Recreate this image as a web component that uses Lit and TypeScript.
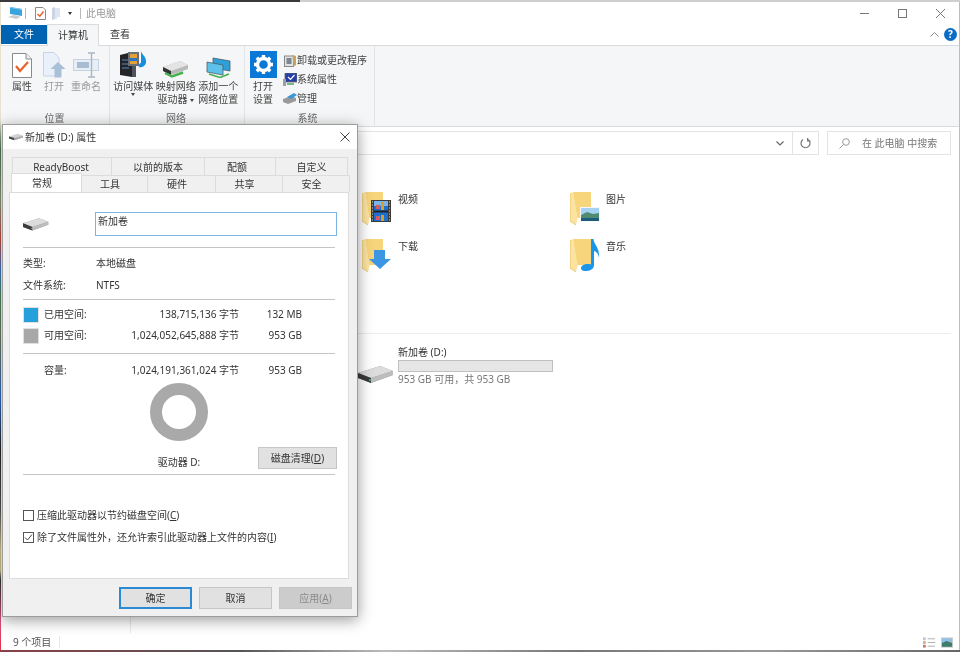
import { css, html, LitElement, svg } from "lit";
import { customElement } from "lit/decorators.js";

const folder = (extra: unknown) => html`<svg width="36" height="36" viewBox="0 0 36 36">
  <path d="M3 0 H21 V26 H7 Z" fill="#f6d57c" />
  <path d="M0 1 L3 0.5 L7.5 26 L6 33 L0 29 Z" fill="#fce3a0" />
  <path d="M0 1 V29 L6 33" fill="none" stroke="#e7bd5c" stroke-width=".8" />
  ${extra}
</svg>`;

const filmOverlay = svg`<g>
  <rect x="9" y="8" width="20" height="22" fill="#3b3b3b" />
  <rect x="12" y="9" width="14" height="20" fill="#1f6fd0" />
  <rect x="12" y="9" width="14" height="5" fill="#7ab4ea" />
  <rect x="19" y="10" width="3" height="8" fill="#d8a02a" />
  <rect x="14" y="13" width="4" height="4" fill="#d85a5a" />
  <rect x="19" y="23" width="3" height="6" fill="#d8a02a" />
  <rect x="14" y="24" width="4" height="4" fill="#d85a5a" />
  <rect x="12" y="18.5" width="14" height="2" fill="#222" />
  <path d="M10 10h1M10 13h1M10 16h1M10 19h1M10 22h1M10 25h1M10 28h1M27 10h1M27 13h1M27 16h1M27 19h1M27 22h1M27 25h1M27 28h1" stroke="#ddd" />
</g>`;
const photoOverlay = svg`<g>
  <rect x="10" y="15" width="20" height="15" fill="#f7f7f7" />
  <rect x="11" y="16" width="18" height="13" fill="#a5d2f2" />
  <path d="M11 23 L17 20 L23 22 L29 21 V29 H11 Z" fill="#4f8a72" />
  <path d="M11 26 H29 V29 H11 Z" fill="#1f5c7a" />
</g>`;
const downOverlay = svg`<path d="M12 11 H23 V20 H29 L18 30 L7 20 H12 Z" fill="#3b97e4" />`;
const noteOverlay = svg`<path d="M21 0 H23.5 C24 6 30 9 29 19 C28.5 15 26.5 12.5 24 12 V26 C24 30 20 32 15 32 C11 32 10 29 12 27 C14 25 18 24.5 21 25.5 Z" fill="#1a96e8" />`;

const drive = (w = 36, h = 22) => html`<svg width=${w} height=${h} viewBox="0 0 36 22">
  <path d="M0 10 L22 3 L35 8 V12 L13 20 L0 15 Z" fill="#8f8f8f" />
  <path d="M0 10 L22 3 L35 8 L13 15 Z" fill="#dcdcdc" />
  <path d="M0 10 L13 15 V20 L0 15 Z" fill="#3a3a3a" />
  <path d="M13 15 L35 8 V12 L13 20 Z" fill="#bdbdbd" />
  <circle cx="12" cy="17" r=".9" fill="#43d17a" />
</svg>`;

const smallDrive = html`<svg width="14" height="8" viewBox="0 0 26 14">
  <path d="M0 6 L16 1 L26 4 V8 L10 13 L0 10 Z" fill="#d2d2d2" />
  <path d="M0 6 L10 9 V13 L0 10 Z" fill="#444" />
  <path d="M10 9 L26 5 V8 L10 13 Z" fill="#aaa" />
</svg>`;

const propsIcon = html`<svg width="20" height="25" viewBox="0 0 20 25">
  <path d="M.5 .5 H14 L19.5 6 V24.5 H.5 Z" fill="#fff" stroke="#8a8a8a" />
  <path d="M14 .5 V6 H19.5" fill="#eee" stroke="#8a8a8a" />
  <path d="M4 13 L8 18 L16 9" fill="none" stroke="#e8622c" stroke-width="2.2" />
</svg>`;
const openIcon = html`<svg width="23" height="26" viewBox="0 0 23 26">
  <path d="M.5 .5 H11 L16 6 V24 H.5 Z" fill="#e9f0fa" stroke="#c5d4ea" />
  <path d="M15 10 L22.5 17 H18.5 V25.5 H11.5 V17 H7.5 Z" fill="#a9c0d8" />
</svg>`;
const renameIcon = html`<svg width="26" height="26" viewBox="0 0 26 26">
  <rect x=".5" y="7.5" width="25" height="11" fill="#e7eef7" stroke="#c5d2e0" />
  <rect x="4" y="10" width="12" height="6" fill="#a9bdd2" />
  <path d="M15 1 H22 M15 25 H22 M18.5 1 V25" fill="none" stroke="#a8b6c4" stroke-width="1.4" />
</svg>`;
const mediaIcon = html`<svg width="28" height="27" viewBox="0 0 28 27">
  <path d="M1 4 L13 1 V26 L1 24 Z" fill="#22262b" />
  <path d="M13 3 L17 4 V26 L13 26 Z" fill="#50555c" />
  <path d="M3 9 H10 M3 13 H10 M3 17 H10" stroke="#5f86b0" />
  <rect x="9" y="1" width="11" height="14" fill="#6a6f78" />
  <rect x="11" y="3" width="7" height="10" fill="#e0a13a" />
  <rect x="11" y="7" width="7" height="3" fill="#2f72c4" />
  <path d="M22 0 C23 4 28 6 27 12 C26 15 23 17 20 16 C19 14 21 12 22 12 Z" fill="#1590e0" />
</svg>`;
const mapIcon = html`<svg width="27" height="17" viewBox="0 0 27 17">
  <path d="M1 6 L18 0 L26 4 V8 L9 14 L1 10 Z" fill="#b9b9b9" />
  <path d="M1 6 L18 0 L26 4 L9 10 Z" fill="#e4e4e4" />
  <path d="M1 6 L9 10 V14 L1 10 Z" fill="#333" />
  <path d="M3 12 L10 15.5 L21 11.5" fill="none" stroke="#46b04f" stroke-width="2.4" />
</svg>`;
const netIcon = html`<svg width="25" height="21" viewBox="0 0 25 21">
  <path d="M7 1 L24 4 V14 L7 11 Z" fill="#2f9fd8" stroke="#4a5e68" stroke-width=".8" />
  <path d="M1 5 L17 8 V18 L1 15 Z" fill="#5ec1ea" stroke="#4a5e68" stroke-width=".8" />
  <path d="M3 17 L14 20.5 L23 17" fill="none" stroke="#46b04f" stroke-width="1.6" />
</svg>`;
const gearIcon = html`<svg width="27" height="27" viewBox="0 0 27 27">
  <rect width="27" height="27" fill="#0a78d7" />
  <g fill="none" stroke="#fff">
    <circle cx="13.5" cy="13.5" r="6" stroke-width="3.4" />
    <path d="M13.5 4 V7.5 M13.5 19.5 V23 M4 13.5 H7.5 M19.5 13.5 H23 M6.8 6.8 L9.3 9.3 M17.7 17.7 L20.2 20.2 M20.2 6.8 L17.7 9.3 M9.3 17.7 L6.8 20.2" stroke-width="3.4" />
  </g>
</svg>`;
const uninstallIcon = html`<svg width="13" height="13" viewBox="0 0 13 13">
  <rect x="1" y="2" width="9" height="10.5" fill="#dfe3e6" stroke="#888" />
  <rect x="3" y="4" width="5" height="6" fill="#7c8790" />
  <path d="M9 1 L12.5 2 V11 L10 12.5 Z" fill="#c9a35a" />
</svg>`;
const sysIcon = html`<svg width="14" height="13" viewBox="0 0 14 13">
  <rect x="2" y="0" width="12" height="9" fill="#233fa8" stroke="#666" stroke-width=".8" />
  <path d="M5 4 L7.5 6.5 L11.5 2" fill="none" stroke="#fff" stroke-width="1.2" />
  <rect x="0" y="6" width="3" height="7" fill="#9aa0a6" />
  <path d="M4 11 H11" stroke="#5aa96a" stroke-width="1.6" />
</svg>`;
const manageIcon = html`<svg width="14" height="11" viewBox="0 0 14 11">
  <path d="M0 6 L8 3 L13 5 V8 L5 11 L0 9 Z" fill="#9a9a9a" />
  <path d="M4 4 L11 0 L14 2 L8 6 Z" fill="#3b97d8" />
</svg>`;
const pcIcon = html`<svg width="15" height="13" viewBox="0 0 15 13">
  <path d="M2 0 L14 2 V9 L2 7 Z" fill="#39a3de" />
  <path d="M2 0 L14 2 V3 L2 1 Z" fill="#7ec7ee" />
  <path d="M0 10 L6 8 L13 10 L8 12 Z" fill="#c8ccd0" />
</svg>`;
const miniCheck = html`<svg width="11" height="13" viewBox="0 0 11 13">
  <path d="M.5 .5 H8 L10.5 3 V12.5 H.5 Z" fill="#fff" stroke="#8a8a8a" />
  <path d="M2.5 7 L4.8 9.2 L8.5 4.5" fill="none" stroke="#e8622c" stroke-width="1.5" />
</svg>`;
const miniFolder = html`<svg width="9" height="13" viewBox="0 0 9 13">
  <path d="M0 1 H8 V10 L5 10 V12 L0 13 Z" fill="#dfe6f0" />
  <path d="M0 1 L3 0 V11 L0 13 Z" fill="#c9d4e4" />
</svg>`;

@customElement("app-root")
export class AppRoot extends LitElement {
  static styles = css`
    :host {
      display: block;
      width: 960px;
      height: 652px;
      overflow: hidden;
      font-family: "Noto Sans", "Noto Sans CJK SC", sans-serif;
      font-size: 10px;
      line-height: 13px;
      color: #333;
    }
    .stage {
      position: relative;
      box-sizing: border-box;
      width: 960px;
      height: 652px;
      padding: 2px 1px 2px 1px;
      filter: blur(0.6px);
      background:
        linear-gradient(90deg, #3a3a3a 0 300px, #cfcfcf 300px) top / 100% 2px no-repeat,
        linear-gradient(90deg, #8a4048, #555 25%, #bbb 40%, #777 60%, #999 80%, #666) bottom / 100% 2px no-repeat,
        linear-gradient(180deg, #e9e2d0 0 120px, #4a7a52 150px, #8a9a78 200px, #c84a40 240px, #3a78c8 270px, #4a8a58 300px, #6a7a60 340px, #2a6ac8 400px, #222 450px, #555 510px, #d8c890 550px, #d8c890 570px, #333 580px, #d85080 620px, #e03040 652px) left / 1.5px 100% no-repeat,
        linear-gradient(#bdbdbd, #bdbdbd) right / 1px 100% no-repeat,
        #fff;
    }
    .window {
      display: flex;
      flex-direction: column;
      height: 100%;
      background: #fff;
    }
    .titlebar {
      display: flex;
      align-items: center;
      height: 22px;
      flex: none;
      padding-left: 7px;
    }
    .titlebar .bar {
      width: 1px;
      height: 11px;
      background: #b8b8b8;
    }
    .titlebar .bar.first { margin: 0 9px 0 2px; }
    .titlebar .title {
      color: #9a9a9a;
      margin-left: 5px;
    }
    .gap-6 { width: 6px; }
    .gap-7 { width: 7px; }
    .gap-8 { width: 8px; }
    .drop {
      width: 0;
      height: 0;
      border: 2.5px solid transparent;
      border-top: 3px solid #333;
      border-bottom: 0;
    }
    .win-controls {
      margin-left: auto;
      display: flex;
      align-items: center;
      padding-right: 14px;
      gap: 29px;
    }
    .tabsbar {
      display: flex;
      align-items: stretch;
      height: 22px;
      flex: none;
      position: relative;
      border-bottom: 1px solid #dadbdc;
      box-sizing: border-box;
    }
    .tab {
      display: flex;
      align-items: center;
      justify-content: center;
      width: 42px;
      box-sizing: border-box;
    }
    .tab.file {
      background: #0063b1;
      color: #fff;
      width: 46px;
      height: 19px;
      margin-top: 1px;
    }
    .tab.on {
      width: 52px;
      border: 1px solid #dadbdc;
      border-bottom: 0;
      height: 22px;
      background: #f5f6f7;
      padding-bottom: 1px;
    }
    .tabsbar .right {
      margin-left: auto;
      display: flex;
      align-items: center;
      gap: 5px;
      padding-right: 2px;
    }
    .help {
      width: 13px;
      height: 13px;
      border-radius: 50%;
      background: #0a6cc4;
      color: #fff;
      font-weight: 700;
      font-size: 10px;
      line-height: 13px;
      text-align: center;
    }
    .ribbon {
      display: flex;
      height: 81px;
      flex: none;
      background: #f5f6f7;
      border-bottom: 1px solid #dadbdc;
      box-sizing: border-box;
    }
    .group {
      display: flex;
      flex-direction: column;
      border-right: 1px solid #e2e3e4;
      box-sizing: border-box;
    }
    .group .body {
      display: flex;
      height: 67px;
      padding-top: 4px;
      box-sizing: border-box;
    }
    .group .name {
      text-align: center;
      color: #6a6a6a;
      line-height: 11px;
      margin-right: 4px;
    }
    .g1 { width: 109px; padding-left: 5px; }
    .g1 .name { margin-right: 6px; }
    .g2 { width: 135px; padding-left: 2px; }
    .g3 { width: 130px; }
    .big {
      display: flex;
      flex-direction: column;
      align-items: center;
      width: 32px;
      text-align: center;
      white-space: nowrap;
      color: #444;
    }
    .big .ico {
      height: 28px;
      display: flex;
      align-items: flex-end;
      margin-bottom: 2px;
    }
    .g2 .big { width: 42.5px; }
    .big.off { color: #9a9a9a; }
    .big.set { width: 36px; }
    .mini-arrow {
      display: inline-block;
      width: 0;
      height: 0;
      border: 2px solid transparent;
      border-top: 3px solid #444;
      border-bottom: 0;
      vertical-align: middle;
    }
    .side {
      display: flex;
      flex-direction: column;
      margin-left: 2px;
      gap: 5px;
      padding-top: 3px;
    }
    .side div {
      display: flex;
      align-items: center;
      height: 14px;
      color: #444;
      white-space: nowrap;
    }
    .side svg {
      width: 14px;
      flex: none;
    }
    .address {
      display: flex;
      height: 32px;
      flex: none;
      padding: 4px 8px 4px 120px;
      box-sizing: border-box;
      gap: 8px;
    }
    .addr-box {
      flex: 1;
      display: flex;
      justify-content: flex-end;
      align-items: center;
      border: 1px solid #e3e3e3;
      box-sizing: border-box;
    }
    .addr-box .chev {
      width: 24px;
      display: flex;
      justify-content: center;
    }
    .addr-box .refresh {
      width: 25px;
      height: 100%;
      border-left: 1px solid #e3e3e3;
      display: flex;
      align-items: center;
      justify-content: center;
    }
    .search {
      width: 124px;
      flex: none;
      display: flex;
      align-items: center;
      gap: 12px;
      padding-left: 11px;
      border: 1px solid #e3e3e3;
      box-sizing: border-box;
      color: #777;
      white-space: nowrap;
    }
    .main {
      flex: 1;
      display: flex;
      min-height: 0;
    }
    .nav {
      width: 129px;
      flex: none;
      border-right: 1px solid #e9e9e9;
    }
    .content {
      flex: 1;
      padding: 33px 8px 0 231px;
      display: flex;
      flex-direction: column;
    }
    .folders {
      display: grid;
      grid-template-columns: 208px 208px;
      grid-auto-rows: 47px;
    }
    .folder {
      display: flex;
      height: 36px;
    }
    .folder span {
      padding-top: 1px;
    }
    .section-line {
      height: 1px;
      background: #ececec;
      margin: 47px 0 0 -4px;
    }
    .drive-row {
      display: flex;
      align-items: flex-end;
      margin-top: 12px;
    }
    .drive-row > svg {
      margin-right: 4px;
      margin-left: -4px;
      margin-bottom: 1px;
    }
    .drive-text {
      display: flex;
      flex-direction: column;
    }
    .meter {
      width: 155px;
      height: 12px;
      margin: 1px 0;
      box-sizing: border-box;
      border: 1px solid #c0c0c0;
      background: #e6e6e6;
    }
    .free-text {
      color: #777;
    }
    .status {
      height: 17px;
      flex: none;
      display: flex;
      align-items: center;
      color: #555;
      padding: 1px 6px 0 12px;
      box-sizing: border-box;
    }
    .status .sep {
      width: 1px;
      height: 12px;
      background: #e8e8e8;
      margin-left: 8px;
    }
    .status .views {
      margin-left: auto;
      display: flex;
      gap: 6px;
      align-items: center;
    }

    /* properties dialog */
    .dialog {
      position: absolute;
      left: 2px;
      top: 124px;
      width: 356px;
      height: 493px;
      box-sizing: border-box;
      display: flex;
      flex-direction: column;
      background: #f0f0f0;
      border: 1px solid #9c9c9c;
      box-shadow: 0 3px 14px rgba(0, 0, 0, 0.4);
    }
    .dlg-title {
      height: 24px;
      flex: none;
      background: #fff;
      display: flex;
      align-items: center;
      padding-left: 6px;
      gap: 2px;
    }
    .dlg-title .x {
      margin-left: auto;
      margin-right: 7px;
    }
    .dlg-tabs {
      padding: 8px 0 0 7px;
      flex: none;
    }
    .tab-row {
      display: flex;
      height: 18px;
    }
    .tab-row div {
      box-sizing: border-box;
      display: flex;
      align-items: center;
      justify-content: center;
      border: 1px solid #dcdcdc;
      border-bottom: 0;
      margin-left: -1px;
      padding-top: 2px;
    }
    .tab-row.one .t1 { width: 100px; margin-left: 2px; padding-right: 2px; }
    .tab-row.one .t2 { width: 94px; }
    .tab-row.one .t3 { width: 72px; padding-right: 6px; }
    .tab-row.one .t4 { width: 73px; }
    .tab-row.two {
      height: 17px;
    }
    .tab-row.two div {
      padding: 1px 9px 0 0;
    }
    .tab-row.two .t1 { width: 71px; margin-left: 1px; }
    .tab-row.two .t2 { width: 67px; }
    .tab-row.two .t3 { width: 69px; }
    .tab-row.two .t4, .tab-row.two .t5 { width: 68px; }
    .tab-row .active {
      background: #fff;
      height: 19px;
      margin-top: -2px;
      z-index: 1;
      padding-bottom: 1px;
    }
    .panel {
      height: 387px;
      flex: none;
      box-sizing: border-box;
      margin-left: 6px;
      width: 340px;
      background: #fff;
      border: 1px solid #dcdcdc;
      padding: 19px 11px 0 13px;
    }
    .name-row {
      display: grid;
      grid-template-columns: 72px 242px;
      align-items: center;
      height: 24px;
    }
    .name-row .input {
      height: 24px;
      box-sizing: border-box;
      border: 1px solid #7ab4e3;
      padding: 1px 2px;
      line-height: 14px;
    }
    .rule {
      height: 1px;
      background: #c4c4c4;
      width: 312px;
    }
    .rule.m11 { margin-top: 11px; }
    .rule.m7 { margin-top: 7px; }
    .info {
      display: grid;
      grid-template-columns: 73px 1fr;
      grid-auto-rows: 22px;
      align-items: center;
      margin: 4px 0 3px;
    }
    .usage {
      display: grid;
      grid-template-columns: 21px 60px 135px 63px;
      grid-auto-rows: 21px;
      align-items: center;
      margin-top: 4px;
    }
    .usage.cap {
      margin-top: 6px;
      grid-auto-rows: 20px;
    }
    .usage .r { text-align: right; }
    .swatch {
      width: 16px;
      height: 16px;
      box-sizing: border-box;
      border: 1px solid #e0e0e0;
    }
    .swatch.used { background: #26a0da; }
    .swatch.avail { background: #a8a8a8; }
    .disk {
      display: grid;
      grid-template-columns: 126px 60px 1fr;
      height: 94px;
      padding-top: 3px;
      box-sizing: border-box;
    }
    .donut-col {
      display: flex;
      flex-direction: column;
      align-items: center;
      grid-column: 2;
      white-space: nowrap;
    }
    .donut-col span {
      margin-top: 15px;
    }
    .clean {
      grid-column: 3;
      align-self: end;
      justify-self: end;
      margin: 0 0 5px 0;
    }
    .btn {
      box-sizing: border-box;
      height: 22px;
      display: flex;
      align-items: center;
      justify-content: center;
      background: #e1e1e1;
      border: 1px solid #c6c6c6;
      color: #333;
    }
    .clean.btn { width: 79px; }
    .checks {
      margin-top: 29px;
    }
    .check {
      display: flex;
      align-items: center;
      height: 22px;
      gap: 3px;
      white-space: nowrap;
    }
    .box {
      width: 11px;
      height: 11px;
      box-sizing: border-box;
      border: 1px solid #555;
      display: flex;
      background: #fff;
    }
    .footer {
      display: flex;
      justify-content: flex-end;
      gap: 7px;
      padding: 8px 5px 0 0;
    }
    .footer .btn { width: 73px; }
    .btn.primary {
      border: 2px solid #2a8ad4;
    }
    .btn.off {
      background: #cccccc;
      color: #8a8a8a;
    }
    u { text-underline-offset: 1px; }
  `;

  render() {
    return html`<div class="stage">
      <div class="window">
        ${this.renderTitle()} ${this.renderRibbon()}
        <div class="address">
          <div class="addr-box">
            <div class="chev">
              <svg width="8" height="5" viewBox="0 0 8 5"><path d="M.5 .5 L4 4 L7.5 .5" fill="none" stroke="#666" stroke-width="1.2" /></svg>
            </div>
            <div class="refresh">
              <svg width="11" height="11" viewBox="0 0 11 11"><path d="M3 1.5 A4.5 4.5 0 1 0 8 1.5 M7.6 0 V3 H10.6" fill="none" stroke="#777" stroke-width="1.2" /></svg>
            </div>
          </div>
          <div class="search">
            <svg width="11" height="11" viewBox="0 0 11 11"><circle cx="7" cy="4" r="3.3" fill="none" stroke="#999" /><path d="M4.6 6.4 L.5 10.5" stroke="#999" /></svg>
            <span>在 此电脑 中搜索</span>
          </div>
        </div>
        <div class="main">
          <div class="nav"></div>
          <div class="content">
            <div class="folders">
              <div class="folder">${folder(filmOverlay)}<span>视频</span></div>
              <div class="folder">${folder(photoOverlay)}<span>图片</span></div>
              <div class="folder">${folder(downOverlay)}<span>下载</span></div>
              <div class="folder">${folder(noteOverlay)}<span>音乐</span></div>
            </div>
            <div class="section-line"></div>
            <div class="drive-row">
              ${drive()}
              <div class="drive-text">
                <span>新加卷 (D:)</span>
                <div class="meter"></div>
                <span class="free-text">953 GB 可用&#xFF0C;共 953 GB</span>
              </div>
            </div>
          </div>
        </div>
        <div class="status">
          <span>9 个项目</span><span class="sep"></span>
          <div class="views">
            <svg width="12" height="11" viewBox="0 0 13 11">
              <rect x="0" y="0" width="3" height="3" fill="#b9c6d6" /><rect x="0" y="4" width="3" height="3" fill="#c9b48a" /><rect x="0" y="8" width="3" height="3" fill="#c87a6a" />
              <path d="M5 1.5 H13 M5 5.5 H13 M5 9.5 H13" stroke="#aaa" />
            </svg>
            <svg width="12" height="11" viewBox="0 0 13 11">
              <rect x=".5" y=".5" width="12" height="10" fill="#8fc0e8" stroke="#ccc" />
              <path d="M1 6 L6 4 L12 6 V10 H1 Z" fill="#3f7d68" />
            </svg>
          </div>
        </div>
      </div>
      ${this.renderDialog()}
    </div>`;
  }

  renderTitle() {
    return html`<div class="titlebar">
        ${pcIcon}
        <span class="bar first"></span>
        ${miniCheck}
        <span class="gap-6"></span>
        ${miniFolder}
        <span class="gap-7"></span>
        <span class="drop"></span>
        <span class="gap-8"></span>
        <span class="bar"></span>
        <span class="title">此电脑</span>
        <div class="win-controls">
          <svg width="9" height="9" viewBox="0 0 9 9"><path d="M0 4.5 H9" stroke="#777" /></svg>
          <svg width="9" height="9" viewBox="0 0 9 9"><rect x=".5" y=".5" width="8" height="8" fill="none" stroke="#777" /></svg>
          <svg width="9" height="9" viewBox="0 0 9 9"><path d="M0 0 L9 9 M9 0 L0 9" stroke="#777" /></svg>
        </div>
      </div>
      <div class="tabsbar">
        <div class="tab file">文件</div>
        <div class="tab on">计算机</div>
        <div class="tab">查看</div>
        <div class="right">
          <svg width="9" height="5" viewBox="0 0 9 5"><path d="M.5 4.5 L4.5 .5 L8.5 4.5" fill="none" stroke="#888" /></svg>
          <div class="help">?</div>
        </div>
      </div>`;
  }

  renderRibbon() {
    return html`<div class="ribbon">
      <div class="group g1">
        <div class="body">
          <div class="big"><div class="ico">${propsIcon}</div>属性</div>
          <div class="big off"><div class="ico">${openIcon}</div>打开</div>
          <div class="big off"><div class="ico">${renameIcon}</div>重命名</div>
        </div>
        <div class="name">位置</div>
      </div>
      <div class="group g2">
        <div class="body">
          <div class="big"><div class="ico">${mediaIcon}</div>访问媒体<span class="mini-arrow"></span></div>
          <div class="big"><div class="ico">${mapIcon}</div>映射网络<span>驱动器 <span class="mini-arrow"></span></span></div>
          <div class="big"><div class="ico">${netIcon}</div>添加一个<span>网络位置</span></div>
        </div>
        <div class="name">网络</div>
      </div>
      <div class="group g3">
        <div class="body">
          <div class="big set"><div class="ico">${gearIcon}</div>打开<span>设置</span></div>
          <div class="side">
            <div>${uninstallIcon}卸载或更改程序</div>
            <div>${sysIcon}系统属性</div>
            <div>${manageIcon}管理</div>
          </div>
        </div>
        <div class="name">系统</div>
      </div>
    </div>`;
  }

  renderDialog() {
    return html`<div class="dialog">
      <div class="dlg-title">
        ${smallDrive}
        <span>新加卷 (D:) 属性</span>
        <svg class="x" width="10" height="10" viewBox="0 0 10 10"><path d="M.5 .5 L9.5 9.5 M9.5 .5 L.5 9.5" stroke="#444" /></svg>
      </div>
      <div class="dlg-tabs">
        <div class="tab-row one">
          <div class="t1">ReadyBoost</div>
          <div class="t2">以前的版本</div>
          <div class="t3">配额</div>
          <div class="t4">自定义</div>
        </div>
        <div class="tab-row two">
          <div class="t1 active">常规</div>
          <div class="t2">工具</div>
          <div class="t3">硬件</div>
          <div class="t4">共享</div>
          <div class="t5">安全</div>
        </div>
      </div>
      <div class="panel">
        <div class="name-row">
          ${drive(26, 16)}
          <div class="input">新加卷</div>
        </div>
        <div class="rule m11"></div>
        <div class="info">
          <span>类型:</span><span>本地磁盘</span>
          <span>文件系统:</span><span>NTFS</span>
        </div>
        <div class="rule"></div>
        <div class="usage">
          <div class="swatch used"></div><span>已用空间:</span><span class="r">138,715,136 字节</span><span class="r">132 MB</span>
          <div class="swatch avail"></div><span>可用空间:</span><span class="r">1,024,052,645,888 字节</span><span class="r">953 GB</span>
        </div>
        <div class="rule m7"></div>
        <div class="usage cap">
          <span></span><span>容量:</span><span class="r">1,024,191,361,024 字节</span><span class="r">953 GB</span>
        </div>
        <div class="disk">
          <div class="donut-col">
            <svg width="58" height="58" viewBox="0 0 58 58"><circle cx="29" cy="29" r="23" fill="none" stroke="#a9a9a9" stroke-width="12" /></svg>
            <span>驱动器 D:</span>
          </div>
          <div class="btn clean">磁盘清理(<u>D</u>)</div>
        </div>
        <div class="rule"></div>
        <div class="checks">
          <div class="check"><span class="box"></span><span>压缩此驱动器以节约磁盘空间(<u>C</u>)</span></div>
          <div class="check">
            <span class="box"><svg width="9" height="9" viewBox="0 0 9 9"><path d="M1 4.5 L3.5 7 L8 1.5" fill="none" stroke="#444" /></svg></span>
            <span>除了文件属性外&#xFF0C;还允许索引此驱动器上文件的内容(<u>I</u>)</span>
          </div>
        </div>
      </div>
      <div class="footer">
        <div class="btn primary">确定</div>
        <div class="btn">取消</div>
        <div class="btn off">应用(<u>A</u>)</div>
      </div>
    </div>`;
  }
}
